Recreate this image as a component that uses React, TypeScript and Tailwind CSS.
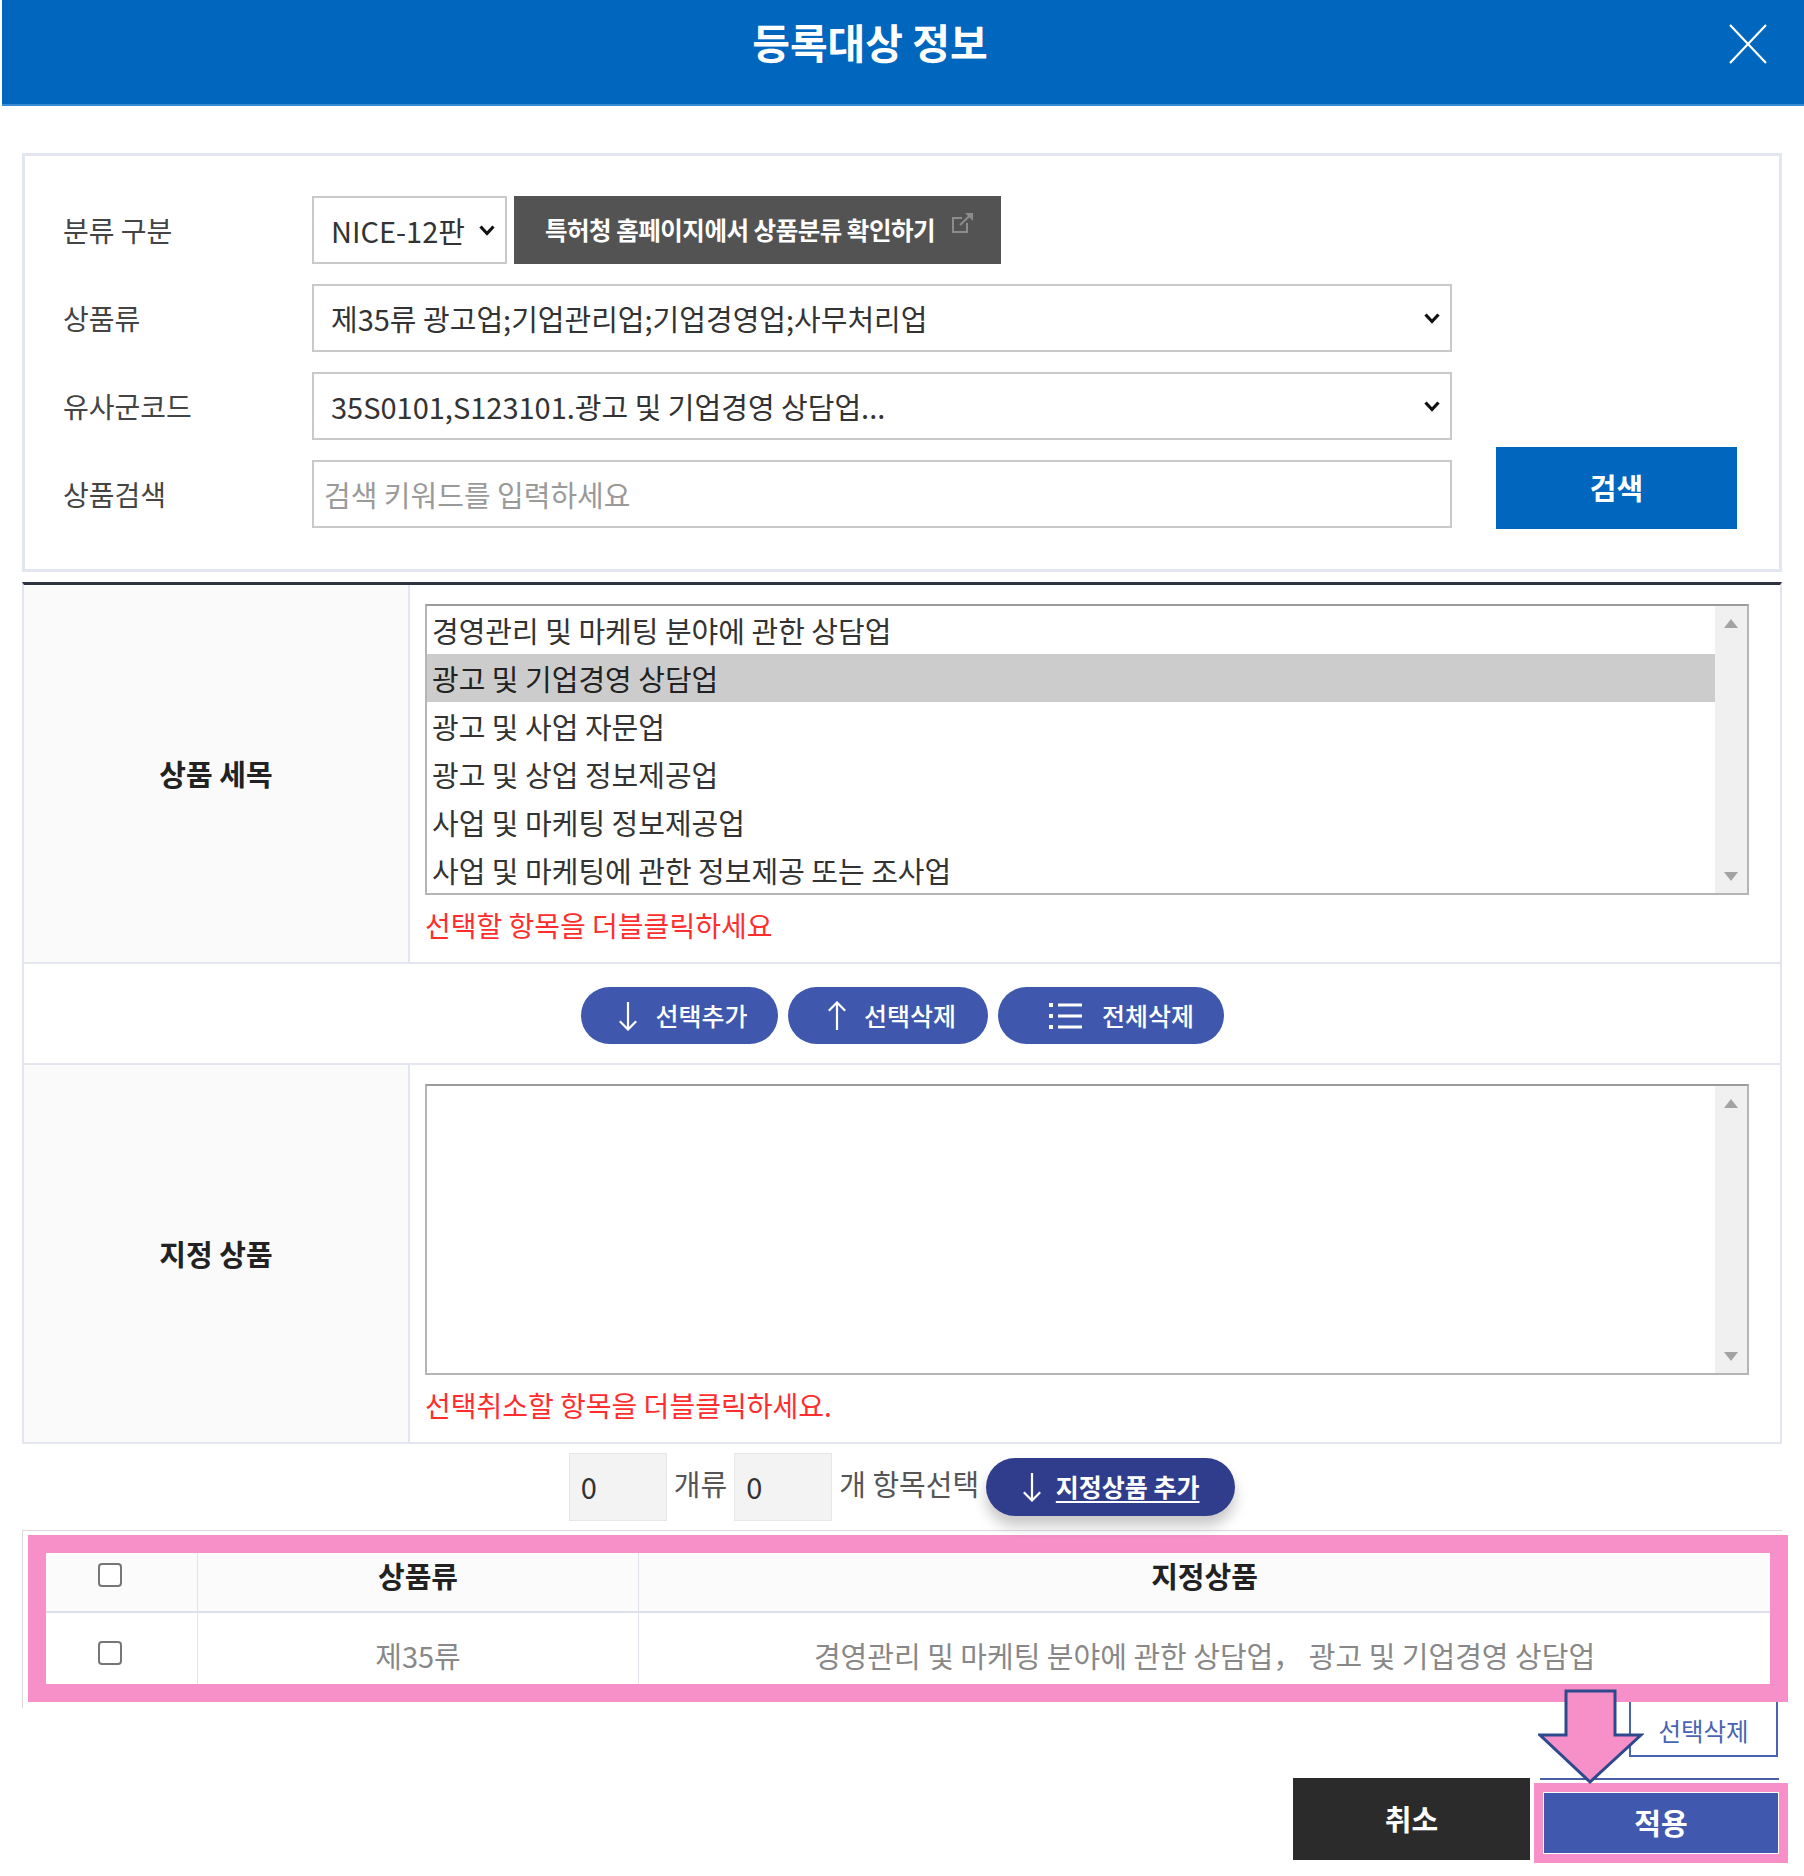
const details = [
  '경영관리 및 마케팅 분야에 관한 상담업',
  '광고 및 기업경영 상담업',
  '광고 및 사업 자문업',
  '광고 및 상업 정보제공업',
  '사업 및 마케팅 정보제공업',
  '사업 및 마케팅에 관한 정보제공 또는 조사업',
];

function Chevron() {
  return (
    <svg width="18" height="12" viewBox="0 0 18 12" className="shrink-0">
      <path d="M2.5 2.5L9 9.5L15.5 2.5" fill="none" stroke="#111" strokeWidth="3.2" />
    </svg>
  );
}

function Arrow({ up = false }: { up?: boolean }) {
  return (
    <svg width="20" height="30" viewBox="0 0 20 30" className={up ? 'rotate-180 shrink-0' : 'shrink-0'}>
      <path d="M10 1V28.5M1.8 20.3L10 28.5L18.2 20.3" fill="none" stroke="#fff" strokeWidth="2.2" />
    </svg>
  );
}

function ListIcon() {
  return (
    <svg width="33" height="26" viewBox="0 0 33 26" className="shrink-0" fill="#fff">
      <rect x="0" y="0" width="4" height="4" />
      <rect x="0" y="11" width="4" height="4" />
      <rect x="0" y="22" width="4" height="4" />
      <rect x="9" y="0.5" width="24" height="3" />
      <rect x="9" y="11.5" width="24" height="3" />
      <rect x="9" y="22.5" width="24" height="3" />
    </svg>
  );
}

function SelectBox({ text, wide }: { text: string; wide?: boolean }) {
  return (
    <div
      className={`flex h-[68px] items-center justify-between border-2 border-[#c9c9c9] bg-white pl-[17px] pr-[9px] ${
        wide ? 'w-[1140px]' : 'w-[195px]'
      }`}
    >
      <span className="text-[29px] leading-[38px] text-[#333]">{text}</span>
      <Chevron />
    </div>
  );
}

function ListBox({ items, selected }: { items: string[]; selected?: number }) {
  return (
    <div className="flex h-[291px] w-[1324px] border-2 border-[#b5b5b5] border-t-[#9b9b9b] bg-white">
      <div className="flex-1">
        {items.map((t, i) => (
          <div
            key={t}
            className={`h-[48px] pl-[5px] text-[29px] leading-[48px] ${
              i === selected ? 'bg-[#cccccc] text-[#222]' : 'text-[#333]'
            }`}
          >
            {t}
          </div>
        ))}
      </div>
      <div className="flex w-[32px] flex-col items-center justify-between bg-[#f0f0f0] pt-[13px] pb-[12px]">
        <span className="h-0 w-0 border-x-[7px] border-b-[9px] border-x-transparent border-b-[#a3a3a3]" />
        <span className="h-0 w-0 border-x-[7px] border-t-[9px] border-x-transparent border-t-[#a3a3a3]" />
      </div>
    </div>
  );
}

function FieldLabel({ children }: { children: string }) {
  return <div className="w-[249px] text-[28px] leading-[38px] text-[#444]">{children}</div>;
}

function Checkbox() {
  return <span className="block h-[24px] w-[24px] rounded-[4px] border-2 border-[#767676] bg-white" />;
}

export default function App() {
  return (
    <div className="relative min-h-[1876px] w-[1804px] bg-white font-['Noto_Sans_CJK_KR','Noto_Sans',sans-serif] text-[#333]">
      {/* Header */}
      <div className="relative ml-[2px] h-[106px] border-b-2 border-[#3a8ad4] bg-[#0066be] pr-[66px] pt-[11px] text-center">
        <h1 className="text-[41px] font-bold leading-[60px] text-white">등록대상 정보</h1>
        <button className="absolute right-[36px] top-[23px]">
          <svg width="40" height="42" viewBox="0 0 40 42">
            <path d="M2 2L38 40M38 2L2 40" stroke="#fff" strokeWidth="2.2" fill="none" />
          </svg>
        </button>
      </div>

      {/* Search panel */}
      <div className="mx-[22px] mt-[47px] flex border-[3px] border-[#e1e6ef] px-[38px] pt-[40px] pb-[41px]">
        <div className="flex flex-col gap-[20px]">
          <div className="flex items-center">
            <FieldLabel>분류 구분</FieldLabel>
            <SelectBox text="NICE-12판" />
            <button className="ml-[7px] flex h-[68px] w-[487px] items-center bg-[#535353] pl-[31px]">
              <span className="text-[24.5px] font-bold leading-[36px] tracking-[-0.02em] text-white">
                특허청 홈페이지에서 상품분류 확인하기
              </span>
              <svg width="24" height="22" viewBox="0 0 24 22" className="mb-[14px] ml-[16px]">
                <path d="M11 6H2V20H16V11" fill="none" stroke="#8c8c8c" strokeWidth="2" />
                <path d="M9 13L19 3.5" fill="none" stroke="#8c8c8c" strokeWidth="2" />
                <polygon points="14,1 22,1 22,9" fill="#8c8c8c" />
              </svg>
            </button>
          </div>
          <div className="flex items-center">
            <FieldLabel>상품류</FieldLabel>
            <SelectBox wide text="제35류 광고업;기업관리업;기업경영업;사무처리업" />
          </div>
          <div className="flex items-center">
            <FieldLabel>유사군코드</FieldLabel>
            <SelectBox wide text="35S0101,S123101.광고 및 기업경영 상담업..." />
          </div>
          <div className="flex items-center">
            <FieldLabel>상품검색</FieldLabel>
            <div className="flex h-[68px] w-[1140px] items-center border-2 border-[#c9c9c9] bg-white pl-[10px]">
              <span className="text-[29px] leading-[38px] text-[#9a9a9a]">검색 키워드를 입력하세요</span>
            </div>
          </div>
        </div>
        <div className="ml-[44px] flex items-end">
          <button className="-mb-[1px] h-[82px] w-[241px] bg-[#0066be] text-[29px] font-bold text-white">검색</button>
        </div>
      </div>

      {/* Selection sections */}
      <div className="mx-[22px] mt-[10px] border-x-2 border-t-[3px] border-x-[#e3e6ee] border-t-[#2d3340]">
        <div className="flex border-b-2 border-[#e3e6ee]">
          <div className="flex w-[386px] items-center justify-center border-r-2 border-[#e3e6ee] bg-[#fafafa] text-[29px] font-bold text-[#222]">
            상품 세목
          </div>
          <div className="pl-[15px] pt-[19px] pb-[19px]">
            <ListBox items={details} selected={1} />
            <div className="mt-[12px] text-[28px] leading-[36px] text-[#ff2d2d]">선택할 항목을 더블클릭하세요</div>
          </div>
        </div>

        <div className="flex justify-center gap-[10px] border-b-2 border-[#e3e6ee] pt-[23px] pb-[19px]">
          <button className="flex h-[57px] w-[197px] items-center justify-center gap-[17px] rounded-full bg-[#3f58ad] pl-[8px] text-[25px] font-medium text-white">
            <Arrow />
            선택추가
          </button>
          <button className="flex h-[57px] w-[200px] items-center justify-center gap-[17px] rounded-full bg-[#3f58ad] pl-[8px] text-[25px] font-medium text-white">
            <Arrow up />
            선택삭제
          </button>
          <button className="flex h-[57px] w-[226px] items-center justify-center gap-[20px] rounded-full bg-[#3f58ad] pl-[22px] text-[25px] font-medium text-white">
            <ListIcon />
            전체삭제
          </button>
        </div>

        <div className="flex border-b-2 border-[#e3e6ee]">
          <div className="flex w-[386px] items-center justify-center border-r-2 border-[#e3e6ee] bg-[#fafafa] text-[29px] font-bold text-[#222]">
            지정 상품
          </div>
          <div className="pl-[15px] pt-[19px] pb-[19px]">
            <ListBox items={[]} />
            <div className="mt-[12px] text-[28px] leading-[36px] text-[#ff2d2d]">선택취소할 항목을 더블클릭하세요.</div>
          </div>
        </div>
      </div>

      {/* Counter row */}
      <div className="mt-[9px] flex items-center justify-center gap-[7px] text-[29px] text-[#555]">
        <div className="flex h-[68px] w-[98px] items-center border border-[#e6e6e6] bg-[#f3f3f3] pl-[11px] text-[#333]">0</div>
        <span className="-mt-[6px]">개류</span>
        <div className="flex h-[68px] w-[98px] items-center border border-[#e6e6e6] bg-[#f3f3f3] pl-[11px] text-[#333]">0</div>
        <span className="-mt-[6px]">개 항목선택</span>
        <button className="flex h-[58px] w-[249px] items-center justify-center gap-[14px] rounded-full bg-[#2f3d8c] text-[25px] font-bold text-white shadow-[0_10px_14px_rgba(0,0,0,0.22)]">
          <Arrow />
          <span className="underline underline-offset-4">지정상품 추가</span>
        </button>
      </div>

      {/* Result table (highlighted) */}
      <div className="mx-[22px] mt-[9px] border-l border-t border-[#d9d9d9] pb-[6px]">
        <div className="ml-[5px] mt-[4px] w-[1760px] border-[18px] border-[#f78fc8] bg-white">
          <div className="grid h-[60px] grid-cols-[151px_441px_1fr] border-b-2 border-[#dde0ea] bg-[#fbfbfb]">
            <div className="pl-[52px] pt-[10px]">
              <Checkbox />
            </div>
            <div className="border-l border-[#e2e2ea] pt-[2px] text-center text-[29px] font-bold leading-[40px] text-[#222]">상품류</div>
            <div className="border-l border-[#e2e2ea] pt-[2px] text-center text-[29px] font-bold leading-[40px] text-[#222]">지정상품</div>
          </div>
          <div className="grid h-[71px] grid-cols-[151px_441px_1fr]">
            <div className="pl-[52px] pt-[28px]">
              <Checkbox />
            </div>
            <div className="border-l border-[#e2e2ea] pt-[22px] text-center text-[29px] leading-[40px] text-[#888]">제35류</div>
            <div className="border-l border-[#e2e2ea] pt-[22px] text-center text-[29px] leading-[40px] text-[#888]">
              경영관리 및 마케팅 분야에 관한 상담업， 광고 및 기업경영 상담업
            </div>
          </div>
        </div>
      </div>

      <div className="-mt-[6px] flex justify-end pr-[26px]">
        <button className="h-[55px] w-[149px] border-x-2 border-b-2 border-[#4a64b4] bg-white pt-[6px] text-[24.5px] text-[#4a64b4]">
          선택삭제
        </button>
      </div>

      {/* Footer */}
      <div className="mt-[21px] flex items-start justify-end gap-[4px] pr-[16px]">
        <button className="h-[82px] w-[237px] bg-[#2b2b2b] text-[29px] font-bold text-white">취소</button>
        <div className="w-[254px]">
          <div className="ml-[6px] h-[2px] w-[239px] bg-[#4b5fa6]" />
          <div className="mt-[3px] border-[9px] border-[#f78fc8] bg-white p-[1px]">
            <button className="h-[60px] w-full bg-[#4058ad] text-[29px] font-bold text-white">적용</button>
          </div>
        </div>
      </div>

      {/* Annotation arrow */}
      <svg width="106" height="96" viewBox="0 0 106 96" className="absolute left-[1538px] top-[1689px]">
        <polygon points="28,2 77,2 77,46 103,46 52,93 2,46 28,46" fill="#f78fc8" stroke="#2e4a8c" strokeWidth="3" strokeLinejoin="miter" />
      </svg>
    </div>
  );
}
